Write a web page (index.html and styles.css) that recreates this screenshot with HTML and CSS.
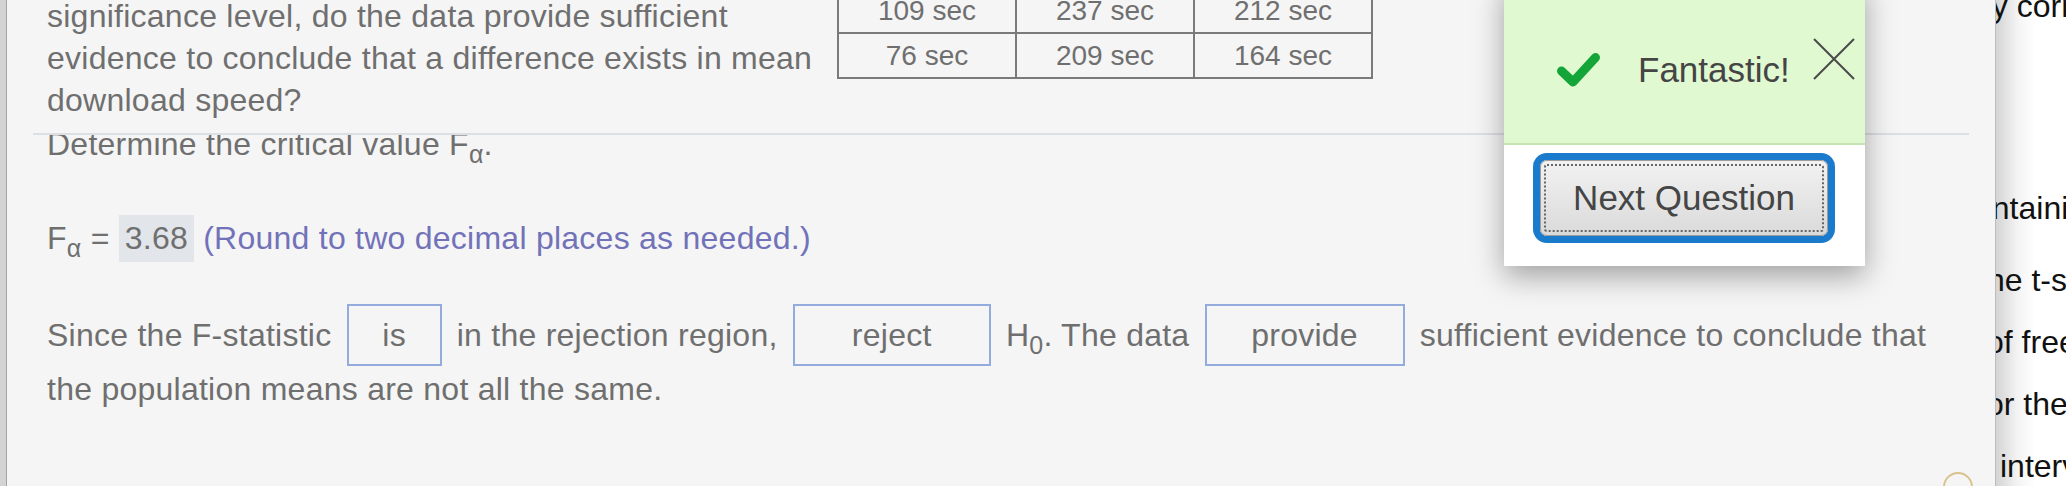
FILE: index.html
```html
<!DOCTYPE html>
<html>
<head>
<meta charset="utf-8">
<link rel="stylesheet" href="styles.css">
</head>
<body>
<div class="strip"></div>
<div class="main">
  <div class="q-pane">
    <div class="q-row">
      <p class="q-text">significance level, do the data provide sufficient evidence to conclude that a difference exists in mean download speed?</p>
      <table class="data">
        <tr><td>109 sec</td><td>237 sec</td><td>212 sec</td></tr>
        <tr><td>76 sec</td><td>209 sec</td><td>164 sec</td></tr>
      </table>
    </div>
  </div>
  <div class="sep"></div>
  <div class="a-pane">
    <div class="det">Determine the critical value F<span class="sub">α</span>.</div>
    <div class="fa">F<span class="sub">α</span> = <span class="ans">3.68</span> <span class="hint">(Round to two decimal places as needed.)</span></div>
    <div class="since">Since the F-statistic <span class="pick w-is">is</span> in the rejection region, <span class="pick w-reject">reject</span> H<span class="sub">0</span>. The data <span class="pick w-provide">provide</span> sufficient evidence to conclude that the population means are not all the same.</div>
  </div>
</div>
<div class="side">
  <div class="sl l0">by correct</div>
  <div class="sl l1">containing</div>
  <div class="sl l2">the t-statistic</div>
  <div class="sl l3">of freedom</div>
  <div class="sl l4">for the</div>
  <div class="sl l5">interval</div>
</div>

<div class="popup">
  <div class="pop-head">
    <svg class="check" width="43" height="34" viewBox="0 0 43 34"><path d="M4.5 18 L16 29 L38.5 4.5" fill="none" stroke="#13a538" stroke-width="9" stroke-linecap="round" stroke-linejoin="round"/></svg>
    <span class="fant">Fantastic!</span>
    <svg class="close" width="42" height="42" viewBox="0 0 42 42"><path d="M1 1 L41 41 M41 1 L1 41" stroke="#4a4a4a" stroke-width="2" fill="none"/></svg>
  </div>
  <div class="pop-body">
    <button class="next">Next Question</button>
  </div>
</div>
<div class="ring"></div>
</body>
</html>
```
FILE: styles.css
```css
html, body {
  margin: 0;
  padding: 0;
}
body {
  width: 2066px;
  height: 486px;
  overflow: hidden;
  position: relative;
  display: flex;
  background: #f5f5f5;
  font-family: "Liberation Sans", Arial, Helvetica, sans-serif;
  font-size: 32px;
  color: #6f6f6f;
}
.strip {
  flex: none;
  width: 6px;
  background: #d3d3d3;
  border-right: 1px solid #a4a4a4;
}
.main {
  flex: 1;
  display: flex;
  flex-direction: column;
  min-width: 0;
  letter-spacing: 0.25px;
}
.q-pane {
  height: 133px;
  overflow: hidden;
  flex: none;
}
.q-row {
  display: flex;
  align-items: flex-start;
  padding-left: 40px;
}
.q-text {
  width: 790px;
  margin: -5px 0 0 0;
  line-height: 42px;
}
.data {
  margin-top: -13px;
  border-collapse: collapse;
  font-size: 28px;
  letter-spacing: 0;
  color: #6f6f6f;
}
.data td {
  border: 2px solid #7a7a7a;
  width: 176px;
  height: 43px;
  padding: 0;
  text-align: center;
  line-height: 43px;
}
.sep {
  flex: none;
  height: 2px;
  background: #dcdfe4;
  margin: 0 26px;
}
.a-pane {
  flex: 1;
  overflow: hidden;
  padding-left: 40px;
}
.det {
  margin-top: -12px;
  line-height: 42px;
}
.sub {
  font-size: 25px;
  vertical-align: -8px;
  line-height: 0;
}
.fa {
  margin-top: 50px;
  line-height: 42px;
}
.ans {
  display: inline-block;
  background: #e2e5ea;
  padding: 3px 6px;
  line-height: 41px;
}
.hint {
  color: #7272b9;
}
.since {
  margin-top: 42px;
  line-height: 46px;
  width: 1900px;
}
.pick {
  display: inline-block;
  box-sizing: border-box;
  height: 62px;
  line-height: 58px;
  border: 2px solid #93acdd;
  text-align: center;
  margin: 0 6px;
}
.w-is { width: 95px; }
.w-reject { width: 198px; }
.w-provide { width: 200px; }

.side {
  flex: none;
  width: 70px;
  border-left: 1px solid #bdbdbd;
  background: linear-gradient(to right, #d4d4d4, #f4f4f4 22px, #ffffff 40px);
  overflow: hidden;
  color: #111;
  font-size: 32px;
}
.sl {
  white-space: nowrap;
  line-height: 62px;
}
.l0 { margin-top: -25px; margin-left: -22px; }
.l1 { margin-top: 140px; margin-left: -38px; }
.l2 { margin-top: 10px; margin-left: -18px; }
.l3 { margin-left: -10px; }
.l4 { margin-left: -19px; }
.l5 { margin-left: 4px; }

.popup {
  position: absolute;
  left: 1504px;
  top: -20px;
  width: 361px;
  background: #fff;
  box-shadow: 0 10px 28px rgba(0, 0, 0, 0.35);
}
.pop-head {
  position: relative;
  box-sizing: border-box;
  height: 165px;
  padding: 17px 0 0 53px;
  display: flex;
  align-items: center;
  background: #e1f9d1;
  border-bottom: 2px solid #c6e4b3;
}
.check {
  flex: none;
}
.fant {
  margin-left: 38px;
  font-size: 35px;
  color: #454545;
}
.close {
  position: absolute;
  left: 309px;
  top: 58px;
}
.pop-body {
  height: 121px;
  box-sizing: border-box;
  padding: 15px 0 0 36px;
}
.next {
  position: relative;
  width: 288px;
  height: 76px;
  padding: 0;
  border: 1px solid #9c9c9c;
  border-radius: 7px;
  background: linear-gradient(#f2f2f2, #dadada);
  box-shadow: 0 0 0 7px #1a7acb;
  font-family: "Liberation Sans", Arial, Helvetica, sans-serif;
  font-size: 35px;
  color: #454545;
}
.next::after {
  content: "";
  position: absolute;
  left: 3px;
  top: 3px;
  right: 3px;
  bottom: 3px;
  border: 2px dotted #666;
  border-radius: 3px;
}
.ring {
  position: absolute;
  left: 1943px;
  top: 472px;
  width: 30px;
  height: 30px;
  box-sizing: border-box;
  border: 2px solid #d8c38d;
  border-radius: 50%;
}
```
